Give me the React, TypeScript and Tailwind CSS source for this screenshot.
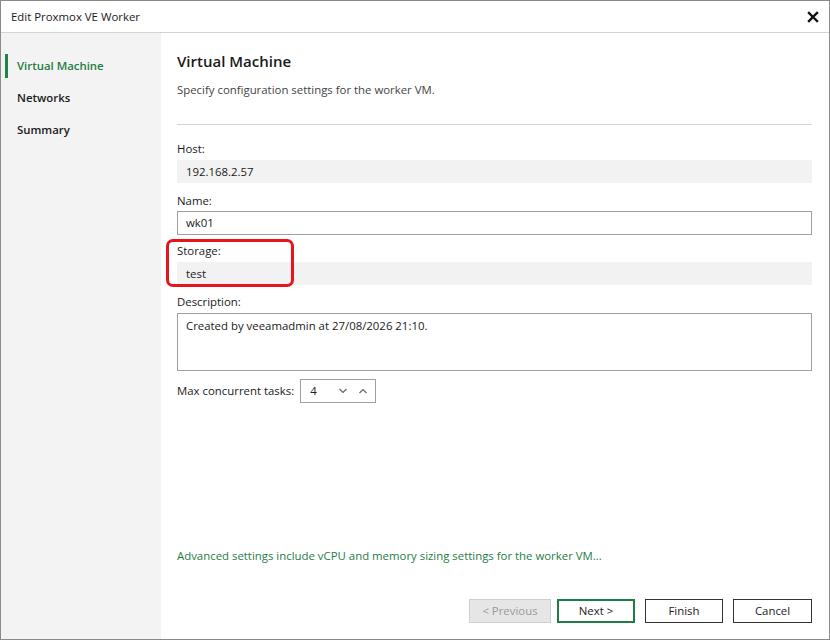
import React from "react";

const font = { fontFamily: '"Segoe UI", "Open Sans", "Noto Sans", sans-serif' };

function Label({ children }: { children: React.ReactNode }) {
  return <div className="h-[17px] leading-[17px] text-[11.4px] text-[#1a1a1a]">{children}</div>;
}

export default function App() {
  return (
    <div className="w-[830px] h-[640px] border border-[#8a8a8a] bg-white flex flex-col text-[11.4px] text-[#1a1a1a] overflow-hidden" style={font}>
      <div className="h-[32px] flex items-center justify-between pl-[10px] pr-[10px] border-b border-[#d4d4d4] shrink-0">
        <span className="text-[11.4px]">Edit Proxmox VE Worker</span>
        <svg width="12" height="12" viewBox="0 0 12 12">
          <path d="M2 2 L10 10 M10 2 L2 10" stroke="#111" strokeWidth="2.4" strokeLinecap="square" />
        </svg>
      </div>
      <div className="flex flex-1 min-h-0">
        <div className="w-[160px] bg-[#f3f3f3] shrink-0 pt-[17px] flex flex-col">
          <div className="h-[32px] flex items-center relative">
            <div className="absolute left-[4px] top-[4px] bottom-[4px] w-[3px] bg-[#1e8449]" />
            <span className="pl-[16px] text-[11.4px] font-semibold text-[#1e7d45]">Virtual Machine</span>
          </div>
          <div className="h-[32px] flex items-center">
            <span className="pl-[16px] text-[11.4px] font-semibold text-[#1a1a1a]">Networks</span>
          </div>
          <div className="h-[32px] flex items-center">
            <span className="pl-[16px] text-[11.4px] font-semibold text-[#1a1a1a]">Summary</span>
          </div>
        </div>
        <div className="flex-1 flex flex-col pl-[16px] pr-[17px] pt-[16px] pb-[16px]">
          <div className="text-[15px] font-semibold h-[24px] leading-[24px] text-[#1a1a1a]">Virtual Machine</div>
          <div className="mt-[8px] text-[11.4px] text-[#444] h-[18px] leading-[18px]">Specify configuration settings for the worker VM.</div>
          <div className="mt-[25px] border-t border-[#d4d4d4]" />
          <div className="mt-[15px] flex flex-col">
            <Label>Host:</Label>
            <div className="mt-[3px] h-[23px] bg-[#f2f2f2] flex items-center pl-[9px]">192.168.2.57</div>
            <div className="mt-[9px]">
              <Label>Name:</Label>
            </div>
            <div className="mt-[2px] h-[24px] border border-[#a0a0a0] flex items-center pl-[8px]">wk01</div>
            <div className="relative mt-[7px]">
              <Label>Storage:</Label>
              <div className="mt-[3px] h-[23px] bg-[#f2f2f2] flex items-center pl-[9px]">test</div>
              <div className="absolute left-[-11px] top-[-3px] w-[128px] h-[48px] border-[3px] border-[#e8141c] rounded-[7px] pointer-events-none" />
            </div>
            <div className="mt-[8px]">
              <Label>Description:</Label>
            </div>
            <div className="mt-[3px] h-[58px] border border-[#a0a0a0] pl-[8px] pt-[3px]">Created by veeamadmin at 27/08/2026 21:10.</div>
            <div className="mt-[8px] flex items-center gap-[6px]">
              <span>Max concurrent tasks:</span>
              <div className="w-[76px] h-[24px] border border-[#a0a0a0] flex items-center pl-[9px]">
                <span className="flex-1">4</span>
                <svg width="10" height="6" viewBox="0 0 10 6" className="mr-[10px]">
                  <path d="M1.5 1 L5 4.5 L8.5 1" stroke="#666" strokeWidth="1.2" fill="none" />
                </svg>
                <svg width="10" height="6" viewBox="0 0 10 6" className="mr-[7px]">
                  <path d="M1.5 5 L5 1.5 L8.5 5" stroke="#666" strokeWidth="1.2" fill="none" />
                </svg>
              </div>
            </div>
          </div>
          <div className="flex-1" />
          <div className="text-[#1e7d45] h-[18px] leading-[18px]">Advanced settings include vCPU and memory sizing settings for the worker VM...</div>
          <div className="mt-[34px] flex justify-end">
            <button className="w-[82px] h-[24px] bg-[#e6e6e6] border border-[#cfcfcf] text-[#9a9a9a] text-[11.4px]">&lt; Previous</button>
            <button className="ml-[6px] w-[78px] h-[24px] bg-white border-2 border-[#1e7d45] text-[#1a1a1a] text-[11.4px]">Next &gt;</button>
            <button className="ml-[10px] w-[78px] h-[24px] bg-white border border-[#333] text-[#1a1a1a] text-[11.4px]">Finish</button>
            <button className="ml-[10px] w-[79px] h-[24px] bg-white border border-[#333] text-[#1a1a1a] text-[11.4px]">Cancel</button>
          </div>
        </div>
      </div>
    </div>
  );
}
